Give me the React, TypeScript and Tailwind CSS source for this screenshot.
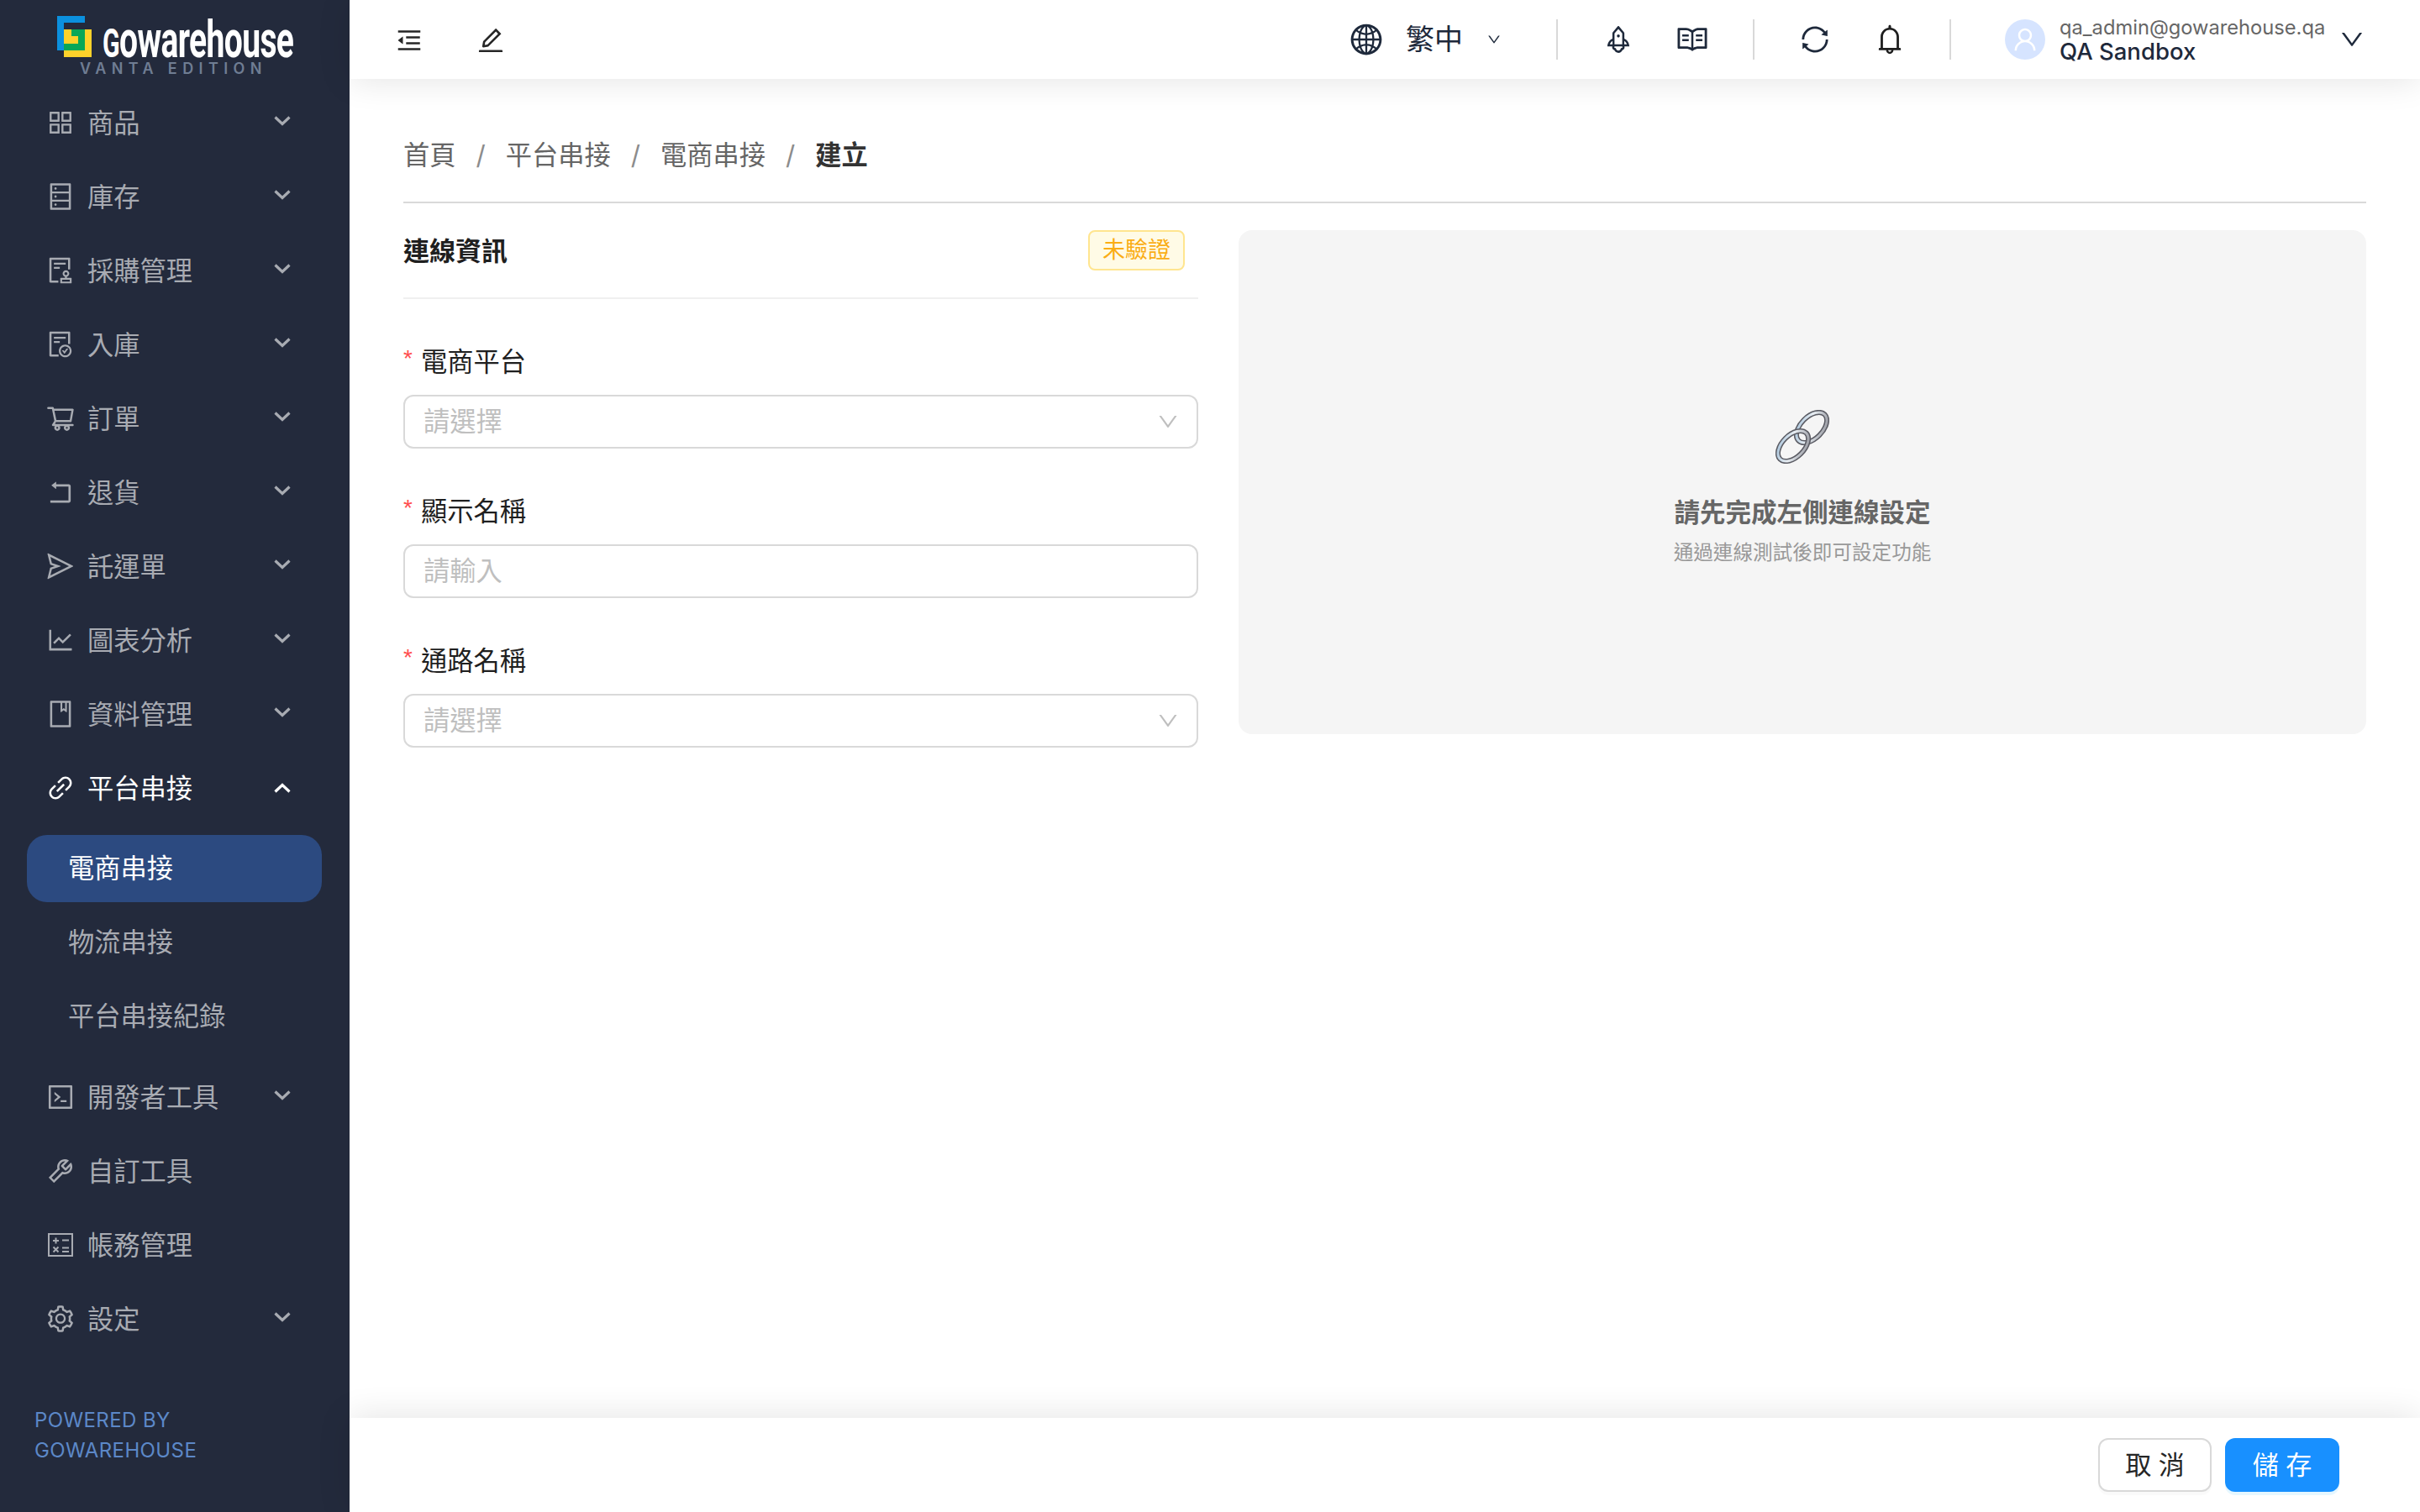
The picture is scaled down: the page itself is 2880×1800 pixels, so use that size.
import type { ReactNode } from 'react'
import {
  AiOutlineAppstore, AiOutlineAudit, AiOutlineBell, AiOutlineBook, AiOutlineCode, AiOutlineDatabase,
  AiOutlineDown, AiOutlineEdit, AiOutlineFileDone, AiOutlineGlobal, AiOutlineLineChart, AiOutlineLink,
  AiOutlineMenuFold, AiOutlineRead, AiOutlineRocket, AiOutlineRollback, AiOutlineSend, AiOutlineSetting,
  AiOutlineShoppingCart, AiOutlineSync, AiOutlineTool, AiOutlineUser,
} from 'react-icons/ai'

const FONT = 'font-["Inter","Noto_Sans_CJK_TC",sans-serif]'

// antd has no wide calculator outline, so this one is drawn by hand
function CalcIcon() {
  return (
    <svg width="32" height="32" viewBox="0 0 32 32" fill="none" stroke="currentColor" strokeWidth="2">
      <rect x="2" y="3" width="28" height="26" />
      <path d="M7 11h7M10.5 7.5v7M7.5 18.5l6 6M13.5 18.5l-6 6M18 10.5h8M18 19.5h8M18 24h8" />
    </svg>
  )
}

function Chevron({ up }: { up?: boolean }) {
  return (
    <svg width="20" height="12" viewBox="0 0 20 12" fill="none" stroke="currentColor" strokeWidth="3.2" className={up ? '' : 'mb-1'}>
      <path d={up ? 'M1.5 10.5L10 2.5l8.5 8' : 'M1.5 1.5L10 9.5l8.5-8'} />
    </svg>
  )
}

function Logo() {
  return (
    <div className="h-[102px] pl-[68px] pt-[19px] relative">
      <div className="flex items-start">
        <svg width="41" height="49" viewBox="0 0 41 49" className="shrink-0">
          <rect x="8" y="16" width="33" height="33" fill="#fed22b" />
          <path d="M0 0h33v8H8v33H0z" fill="#0b90de" />
          <path d="M17 16h16v25H8v-8h17V24h-8z" fill="#08a757" />
        </svg>
        <span className="ml-[13px] mt-[5px] block origin-left scale-x-[0.63] whitespace-nowrap font-['Roboto',sans-serif] text-[62px] leading-[46px] font-bold tracking-[-1px] text-white">
          <span className="text-[48px]">G</span>owarehouse
        </span>
      </div>
      <div className="absolute left-[95px] top-[73px] whitespace-nowrap font-['Inter',sans-serif] text-[18px] leading-[18px] font-semibold tracking-[6.4px] text-[#6f7d93]">
        VANTA EDITION
      </div>
    </div>
  )
}

function NavItem({ icon, label, arrow, open }: { icon: ReactNode; label: string; arrow?: boolean; open?: boolean }) {
  return (
    <div className={`h-[88px] flex items-center pl-[54px] pr-[70px] ${open ? 'text-white' : 'text-[#a8abb2]'}`}>
      <span className="w-[36px] h-[36px] flex items-center justify-center text-[36px]">{icon}</span>
      <span className="ml-[14px] mt-[2px] flex-1 text-[31.25px] leading-[40px]">{label}</span>
      {arrow && <Chevron up={open} />}
    </div>
  )
}

function Sidebar() {
  return (
    <aside className="w-[416px] shrink-0 bg-[#232a3c] flex flex-col">
      <Logo />
      <NavItem icon={<AiOutlineAppstore />} label="商品" arrow />
      <NavItem icon={<AiOutlineDatabase />} label="庫存" arrow />
      <NavItem icon={<AiOutlineAudit />} label="採購管理" arrow />
      <NavItem icon={<AiOutlineFileDone />} label="入庫" arrow />
      <NavItem icon={<AiOutlineShoppingCart />} label="訂單" arrow />
      <NavItem icon={<AiOutlineRollback />} label="退貨" arrow />
      <NavItem icon={<AiOutlineSend />} label="託運單" arrow />
      <NavItem icon={<AiOutlineLineChart />} label="圖表分析" arrow />
      <NavItem icon={<AiOutlineBook />} label="資料管理" arrow />
      <NavItem icon={<AiOutlineLink />} label="平台串接" arrow open />
      <div className="py-[12px] pl-[32px] pr-[33px] text-[31.25px] leading-[40px] flex flex-col gap-2">
        <div className="h-[80px] rounded-[24px] bg-[#2c4a80] text-white flex items-center pl-[49px]">電商串接</div>
        <div className="h-[80px] text-[#a8abb2] flex items-center pl-[49px]">物流串接</div>
        <div className="h-[80px] text-[#a8abb2] flex items-center pl-[49px]">平台串接紀錄</div>
      </div>
      <NavItem icon={<AiOutlineCode />} label="開發者工具" arrow />
      <NavItem icon={<AiOutlineTool />} label="自訂工具" />
      <NavItem icon={<CalcIcon />} label="帳務管理" />
      <NavItem icon={<AiOutlineSetting />} label="設定" arrow />
      <div className="mt-auto pl-[41px] pb-[55px] text-[24px] leading-[36px] tracking-[0.4px] text-[#5c88c8]">
        POWERED BY
        <br />
        GOWAREHOUSE
      </div>
    </aside>
  )
}

function Divider() {
  return <div className="w-[2px] h-[48px] bg-[#d9d9d9]" />
}

function Header() {
  return (
    <header className="h-[94px] shrink-0 bg-white relative z-10 shadow-[0_2px_40px_rgba(0,0,0,0.11)] flex items-center">
      <AiOutlineMenuFold className="ml-[54px] mt-[2px] text-[34px] text-[#262626]" />
      <AiOutlineEdit className="ml-[62px] mt-[2px] text-[36px] text-[#262626]" />
      <div className="ml-auto flex items-center text-[#1e293b]">
        <AiOutlineGlobal className="text-[42px]" />
        <span className="ml-[26px] text-[34px] leading-[40px]">繁中</span>
        <AiOutlineDown className="ml-[28px] text-[18px]" />
        <div className="ml-[65px]"><Divider /></div>
        <AiOutlineRocket className="ml-[53px] text-[38px]" />
        <AiOutlineRead className="ml-[49px] text-[40px]" />
        <div className="ml-[52px]"><Divider /></div>
        <AiOutlineSync className="ml-[53px] text-[38px]" />
        <AiOutlineBell className="ml-[50px] text-[40px] text-[#1f1f1f]" />
        <div className="ml-[51px]"><Divider /></div>
        <div className="ml-[64px] w-[48px] h-[48px] rounded-full bg-[#d6e4ff] flex items-center justify-center text-white text-[34px]">
          <AiOutlineUser />
        </div>
        <div className="ml-[17px] w-[316px] flex flex-col">
          <span className="text-[23.7px] leading-[28px] text-[#666666]">qa_admin@gowarehouse.qa</span>
          <span className="text-[27.5px] leading-[28px] font-medium">QA Sandbox</span>
        </div>
        <AiOutlineDown className="ml-[16px] mr-[65px] text-[32px]" />
      </div>
    </header>
  )
}

function Breadcrumb() {
  const sep = <span className="mx-[24px] text-[#8c8c8c]">/</span>
  return (
    <div className="pb-[35px] border-b-2 border-[#d9d9d9] text-[31.25px] leading-[40px] text-[#666666] flex">
      <span>首頁</span>{sep}<span>平台串接</span>{sep}<span>電商串接</span>{sep}
      <span className="font-semibold text-[#333333]">建立</span>
    </div>
  )
}

function Field({ label, placeholder, select }: { label: string; placeholder: string; select?: boolean }) {
  return (
    <div className="mt-[55px]">
      <div className="flex text-[31.25px] leading-[40px] text-[#1f1f1f]">
        <span className="w-[21px] font-['Liberation_Sans',sans-serif] text-[28px] leading-[32px] text-[#ff4d4f]">*</span>
        {label}
      </div>
      <div className="mt-[19px] h-[64px] rounded-[12px] border-2 border-[#d9d9d9] bg-white flex items-center pl-[22px] pr-[20px] text-[31.25px] text-[#bfbfbf]">
        <span className="flex-1">{placeholder}</span>
        {select && <AiOutlineDown className="text-[28px]" />}
      </div>
    </div>
  )
}

function ChainEmoji() {
  return (
    <svg width="64" height="64" viewBox="0 0 64 64" fill="none">
      <defs>
        <linearGradient id="ring" x1="0" y1="0" x2="1" y2="1">
          <stop offset="0" stopColor="#9dbcd6" />
          <stop offset="0.45" stopColor="#e8eef3" />
          <stop offset="1" stopColor="#8b8c94" />
        </linearGradient>
      </defs>
      <ellipse cx="43" cy="21" rx="22" ry="13" transform="rotate(-45 43 21)" stroke="#5a5b63" strokeWidth="6" />
      <ellipse cx="43" cy="21" rx="22" ry="13" transform="rotate(-45 43 21)" stroke="url(#ring)" strokeWidth="3" />
      <ellipse cx="21" cy="43" rx="22" ry="13" transform="rotate(-45 21 43)" stroke="#5a5b63" strokeWidth="6" />
      <ellipse cx="21" cy="43" rx="22" ry="13" transform="rotate(-45 21 43)" stroke="url(#ring)" strokeWidth="3" />
    </svg>
  )
}

export default function App() {
  return (
    <div className={`w-screen h-screen overflow-hidden flex bg-white ${FONT}`}>
      <Sidebar />
      <div className="flex-1 min-w-0 flex flex-col">
        <Header />
        <main className="flex-1 min-h-0 px-[64px] pt-[71px]">
          <Breadcrumb />
          <div className="mt-[32px] flex gap-[48px]">
            <section className="w-[946px] shrink-0">
              <div className="pb-[32px] border-b-2 border-[#f0f0f0] flex items-center justify-between">
                <h2 className="mt-[2px] text-[31px] leading-[46px] font-semibold text-[#1f1f1f]">連線資訊</h2>
                <span className="mr-[16px] h-[48px] rounded-[8px] border-2 border-[#ffe58f] bg-[#fffbe6] px-[15px] text-[27px] leading-[44px] text-[#faad14]">未驗證</span>
              </div>
              <Field label="電商平台" placeholder="請選擇" select />
              <Field label="顯示名稱" placeholder="請輸入" />
              <Field label="通路名稱" placeholder="請選擇" select />
            </section>
            <section className="flex-1 h-[600px] rounded-[16px] bg-[#f5f5f5] flex flex-col items-center pt-[214px]">
              <ChainEmoji />
              <div className="mt-[38px] text-[30.5px] leading-[40px] font-semibold text-[#666666]">請先完成左側連線設定</div>
              <div className="mt-[10px] text-[23.6px] leading-[36px] text-[#999999]">通過連線測試後即可設定功能</div>
            </section>
          </div>
        </main>
        <footer className="h-[112px] shrink-0 bg-white relative z-10 shadow-[0_-2px_40px_rgba(0,0,0,0.11)] flex justify-end gap-[16px] pt-[24px] pr-[96px]">
          <button className="w-[135px] h-[64px] rounded-[12px] border-2 border-[#d9d9d9] bg-white text-[31px] text-[#262626] shadow-[0_4px_0_rgba(0,0,0,0.02)]">取 消</button>
          <button className="w-[136px] h-[64px] rounded-[12px] bg-[#1890ff] text-[31px] text-white shadow-[0_4px_0_#e6f7ff]">儲 存</button>
        </footer>
      </div>
    </div>
  )
}
